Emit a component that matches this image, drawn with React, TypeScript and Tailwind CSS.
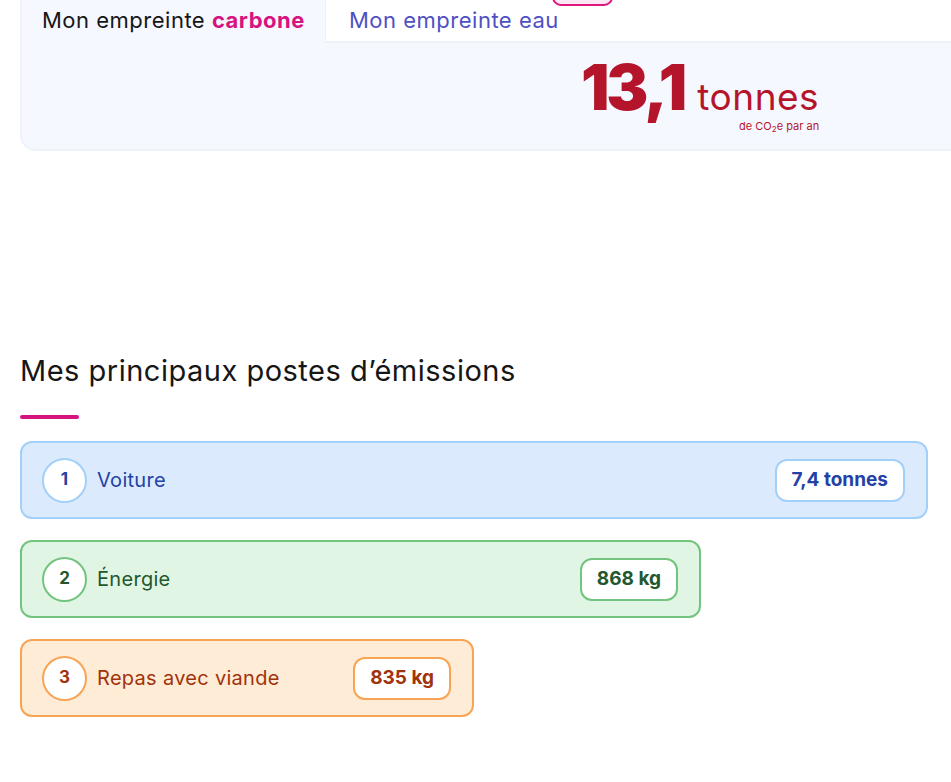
import React from 'react';

type Poste = {
  rank: number;
  label: string;
  value: string;
  width: string;
  card: string;
  circle: string;
  text: string;
};

const postes: Poste[] = [
  {
    rank: 1,
    label: 'Voiture',
    value: '7,4 tonnes',
    width: 'w-full',
    card: 'bg-[#dbebfd] border-[#a3d0f8]',
    circle: 'border-[#a3d0f8]',
    text: 'text-[#2341a6]',
  },
  {
    rank: 2,
    label: 'Énergie',
    value: '868 kg',
    width: 'w-3/4',
    card: 'bg-[#e1f5e4] border-[#72c47f]',
    circle: 'border-[#72c47f]',
    text: 'text-[#23572e]',
  },
  {
    rank: 3,
    label: 'Repas avec viande',
    value: '835 kg',
    width: 'w-1/2',
    card: 'bg-[#ffecd6] border-[#f8a455]',
    circle: 'border-[#f8a455]',
    text: 'text-[#a0330c]',
  },
];

const PosteCard = ({ poste }: { poste: Poste }) => (
  <div
    className={`${poste.width} ${poste.card} ${poste.text} h-[78px] flex items-center justify-between border-2 rounded-xl pl-[20px] pr-[21px]`}
  >
    <div className="flex items-center gap-[10px]">
      <div
        className={`w-[45px] h-[45px] rounded-full bg-white border-2 ${poste.circle} flex items-center justify-center text-[17px] font-bold`}
      >
        {poste.rank}
      </div>
      <span className="text-[20px] tracking-[0.3px]">{poste.label}</span>
    </div>
    <div
      className={`h-[43px] px-[15px] rounded-xl bg-white border-2 ${poste.circle} flex items-center text-[19px] font-bold`}
    >
      {poste.value}
    </div>
  </div>
);

export default function App() {
  return (
    <div
      className="w-[951px] h-[782px] overflow-hidden bg-white text-[#161616]"
      style={{ fontFamily: 'Inter, "Noto Sans", sans-serif' }}
    >
      {/* Onglets + bloc empreinte */}
      <div className="ml-[20px] w-[1360px]">
        <div className="flex h-[43px]">
          <div className="w-[305px] bg-[#f5f8ff] border-l-2 border-[#eef2fb] pl-[20px] pt-[4px] text-[22px] tracking-[0.5px]">
            Mon empreinte <span className="font-bold text-[#d6147f]">carbone</span>
          </div>
          <div className="relative w-[305px] bg-white border-l border-b-2 border-[#eef2fb] pl-[23px] pt-[4px] text-[22px] tracking-[0.5px] text-[#4f4fc4]">
            <span className="absolute left-[226px] -top-[12px] w-[61px] h-[18px] rounded-full border-2 border-[#e0167e] bg-[#fde8f3]" />
            Mon empreinte eau
          </div>
          <div className="flex-1 border-b-2 border-[#eef2fb]" />
        </div>
        <div className="h-[108px] bg-[#f5f8ff] border-2 border-t-0 border-[#eef2fb] rounded-bl-2xl flex justify-center pt-[13px]">
          <div className="flex flex-col items-end text-[#b5152b]">
            <div className="flex items-baseline gap-[13px]">
              <span className="text-[63px] leading-none font-black tracking-[-3px]">13,1</span>
              <span className="text-[37px] leading-none tracking-[0.5px]">tonnes</span>
            </div>
            <span className="text-[11px] -mt-[1px]">
              de CO<sub className="text-[8px]">2</sub>e par an
            </span>
          </div>
        </div>
      </div>

      {/* Principaux postes */}
      <div className="ml-[20px] w-[908px] mt-[202px]">
        <h2 className="text-[29px] leading-[36px] tracking-[0.5px]">Mes principaux postes d’émissions</h2>
        <div className="w-[59px] h-[4px] rounded-full bg-[#d6147f] mt-[26px]" />
        <div className="flex flex-col gap-[21px] mt-[22px]">
          {postes.map((p) => (
            <PosteCard key={p.rank} poste={p} />
          ))}
        </div>
      </div>
    </div>
  );
}
